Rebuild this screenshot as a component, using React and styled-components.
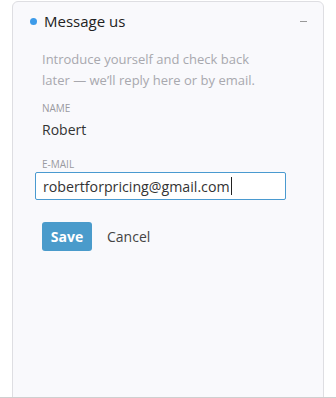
import styled, { createGlobalStyle } from "styled-components";

const GlobalStyle = createGlobalStyle`
  html, body {
    margin: 0;
    padding: 0;
    background: #fff;
  }
  body {
    font-family: "Open Sans", "Liberation Sans", sans-serif;
  }
`;

const Page = styled.div`
  height: 396px;
  border-bottom: 2px solid #cfcfcf;
  padding: 1px 12px 0 12px;
  box-sizing: content-box;
  overflow: hidden;
`;

const Card = styled.div`
  height: 410px;
  background: #f9f9fc;
  border: 1px solid #dedee2;
  border-radius: 6px;
  box-sizing: border-box;
`;

const Header = styled.div`
  display: flex;
  align-items: center;
  height: 38px;
  padding: 0 16px 0 17px;
`;

const Dot = styled.span`
  width: 7px;
  height: 7px;
  border-radius: 50%;
  background: #3d9be9;
  margin-right: 7px;
`;

const Title = styled.span`
  flex: 1;
  font-size: 15px;
  color: #222;
`;

const Minus = styled.span`
  width: 7px;
  height: 1px;
  background: #999;
`;

const Body = styled.div`
  padding: 9px 0 0 29px;
`;

const Intro = styled.p`
  margin: 0;
  font-size: 13px;
  line-height: 21px;
  color: #a8a8ae;
  width: 222px;
`;

const Label = styled.div`
  font-size: 10px;
  color: #9a9aa0;
  text-transform: uppercase;
  margin-top: ${(p) => p.$top}px;
  line-height: 14px;
`;

const Value = styled.div`
  font-size: 14px;
  color: #333;
  line-height: 20px;
  margin-top: 5px;
`;

const Input = styled.div`
  margin: 1px 0 0 -7px;
  width: 251px;
  height: 28px;
  border: 1px solid #4a9ad0;
  border-radius: 2px;
  background: #fff;
  box-sizing: border-box;
  padding-left: 7px;
  display: flex;
  align-items: center;
  font-size: 14.2px;
  color: #333;
`;

const Caret = styled.span`
  width: 1px;
  height: 18px;
  background: #222;
  margin-left: 1px;
`;

const Actions = styled.div`
  display: flex;
  align-items: center;
  gap: 15px;
  margin-top: 22px;
`;

const SaveButton = styled.button`
  width: 50px;
  height: 29px;
  border: none;
  border-radius: 3px;
  background: #4a9bcb;
  color: #fff;
  font-family: inherit;
  font-weight: 700;
  font-size: 14px;
  padding: 0;
`;

const CancelButton = styled.button`
  border: none;
  background: none;
  color: #444;
  font-family: inherit;
  font-size: 14px;
  padding: 0;
`;

export default function App() {
  return (
    <>
      <GlobalStyle />
      <Page>
        <Card>
          <Header>
            <Dot />
            <Title>Message us</Title>
            <Minus />
          </Header>
          <Body>
            <Intro>
              Introduce yourself and check back later — we’ll reply here or by
              email.
            </Intro>
            <Label $top={10}>Name</Label>
            <Value>Robert</Value>
            <Label $top={17}>E-mail</Label>
            <Input>
              robertforpricing@gmail.com
              <Caret />
            </Input>
            <Actions>
              <SaveButton>Save</SaveButton>
              <CancelButton>Cancel</CancelButton>
            </Actions>
          </Body>
        </Card>
      </Page>
    </>
  );
}
